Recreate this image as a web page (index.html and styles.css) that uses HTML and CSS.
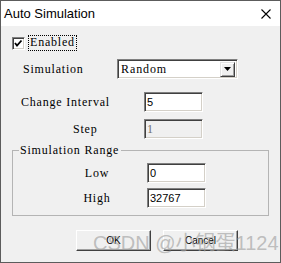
FILE: index.html
```html
<!DOCTYPE html>
<html lang="en">
<head>
  <meta charset="UTF-8" />
  <title>Auto Simulation</title>
  <link rel="stylesheet" href="styles.css">
</head>
<body>

<div class="window">
  <div class="titlebar">
    <span class="title">Auto Simulation</span>
    <svg class="close" width="10" height="10" viewBox="0 0 10 10">
      <path d="M0.5 0.5 L9.5 9.5 M9.5 0.5 L0.5 9.5" stroke="#000" stroke-width="1.1" fill="none"/>
    </svg>
  </div>

  <div class="dialog">
    <div class="row row-enabled">
      <span class="check">
        <svg width="9" height="9" viewBox="0 0 9 9">
          <path d="M1 4 L3 6.5 L7.5 1.5" stroke="#000" stroke-width="1.8" fill="none"/>
        </svg>
      </span>
      <span class="focus">Enabled</span>
    </div>

    <div class="row row-sim">
      <span class="label lbl-sim">Simulation</span>
      <div class="combo">
        <span class="combo-text">Random</span>
        <span class="combo-btn">
          <svg width="7" height="4" viewBox="0 0 7 4"><path d="M0 0 H7 L3.5 4 Z" fill="#000"/></svg>
        </span>
      </div>
    </div>

    <div class="row row-interval">
      <span class="label lbl-interval">Change Interval</span>
      <div class="edit">5</div>
    </div>

    <div class="row row-step">
      <span class="label lbl-step">Step</span>
      <div class="edit disabled">1</div>
    </div>

    <fieldset class="group">
      <legend>Simulation Range</legend>
      <div class="row row-low">
        <span class="label lbl-range">Low</span>
        <div class="edit">0</div>
      </div>
      <div class="row row-high">
        <span class="label lbl-range">High</span>
        <div class="edit">32767</div>
      </div>
    </fieldset>

    <div class="buttons">
      <button class="btn">OK</button>
      <button class="btn">Cancel</button>
    </div>
  </div>

  <div class="watermark">CSDN @小锅蛋1124</div>
</div>

</body>
</html>
```

FILE: styles.css
```css
body {
  margin: 0;
  background: #fff;
}

.window {
  position: relative;
  width: 281px;
  height: 263px;
  box-sizing: border-box;
  border: 1px solid #5c5c5c;
  background: #f0f0f0;
  overflow: hidden;
}

.titlebar {
  height: 25px;
  background: #fff;
  display: flex;
  align-items: center;
  justify-content: space-between;
  padding: 0 9px 0 3px;
}

.title {
  font-family: "Liberation Sans", Arial, sans-serif;
  font-size: 13px;
  color: #000;
}

.close {
  margin-top: 1px;
}

.dialog {
  font-family: "Liberation Serif", "Times New Roman", serif;
  font-size: 12px;
  letter-spacing: 0.8px;
  color: #000;
}

.row {
  display: flex;
  align-items: center;
}

.row-enabled {
  height: 16px;
  margin-top: 9px;
  padding-left: 11px;
}

.check {
  width: 13px;
  height: 13px;
  box-sizing: border-box;
  background: #fff;
  border-top: 1px solid #808080;
  border-left: 1px solid #808080;
  border-right: 1px solid #fff;
  border-bottom: 1px solid #fff;
  box-shadow: inset 1px 1px 0 #404040, inset -1px -1px 0 #d4d0c8;
  display: flex;
  align-items: center;
  justify-content: center;
}

.focus {
  margin-left: 3px;
  padding: 1px 1px 2px 1px;
  border: 1px dotted #000;
  line-height: 11px;
}

.row-sim {
  height: 20px;
  margin-top: 8px;
}

.label {
  white-space: nowrap;
}

.lbl-sim {
  padding-left: 22px;
  width: 94px;
}

.combo {
  width: 121px;
  height: 20px;
  box-sizing: border-box;
  background: #fff;
  border-top: 1px solid #808080;
  border-left: 1px solid #808080;
  border-right: 1px solid #fff;
  border-bottom: 1px solid #fff;
  box-shadow: inset 1px 1px 0 #404040, inset -1px -1px 0 #d4d0c8;
  display: flex;
  align-items: center;
  justify-content: space-between;
  padding: 0 2px 0 3px;
}

.combo-text {
  letter-spacing: 0.9px;
}

.combo-btn {
  width: 15px;
  height: 15px;
  box-sizing: border-box;
  background: #f0f0f0;
  border-top: 1px solid #e3e3e3;
  border-left: 1px solid #e3e3e3;
  border-right: 1px solid #404040;
  border-bottom: 1px solid #404040;
  box-shadow: inset 1px 1px 0 #fff, inset -1px -1px 0 #a0a0a0;
  display: flex;
  align-items: center;
  justify-content: center;
}

.edit {
  width: 59px;
  height: 20px;
  box-sizing: border-box;
  background: #fff;
  border-top: 1px solid #808080;
  border-left: 1px solid #808080;
  border-right: 1px solid #fff;
  border-bottom: 1px solid #fff;
  box-shadow: inset 1px 1px 0 #404040, inset -1px -1px 0 #d4d0c8;
  padding: 0 2px;
  font-family: "Liberation Sans", Arial, sans-serif;
  font-size: 11px;
  letter-spacing: 0;
  line-height: 18px;
}

.edit.disabled {
  background: #f0f0f0;
  color: #6d6d6d;
  font-family: "Liberation Serif", "Times New Roman", serif;
  font-size: 12px;
}

.row-interval {
  height: 20px;
  margin-top: 13px;
}

.lbl-interval {
  padding-left: 20px;
  width: 123px;
}

.row-step {
  height: 20px;
  margin-top: 7px;
}

.lbl-step {
  padding-left: 72px;
  width: 71px;
}

.group {
  margin: 5px 11px 0 11px;
  padding: 0;
  height: 72px;
  box-sizing: border-box;
  border: 1px solid #b4b4b4;
  min-width: 0;
}

.group legend {
  margin-left: 6px;
  padding: 0 2px 0 1px;
  line-height: 12px;
}

.row-low {
  height: 20px;
  margin-top: 7px;
}

.row-high {
  height: 20px;
  margin-top: 5px;
}

.lbl-range {
  margin-left: 64px;
  width: 40px;
  text-align: center;
  margin-right: 30px;
}

.buttons {
  display: flex;
  gap: 12px;
  margin-top: 14px;
  padding-left: 75px;
}

.btn {
  width: 75px;
  height: 21px;
  box-sizing: border-box;
  margin: 0;
  padding: 0;
  background: #f0f0f0;
  border-top: 1px solid #fff;
  border-left: 1px solid #fff;
  border-right: 1px solid #404040;
  border-bottom: 1px solid #404040;
  box-shadow: inset -1px -1px 0 #a0a0a0;
  font-family: "Liberation Sans", Arial, sans-serif;
  font-size: 10px;
  color: #000;
}

.watermark {
  position: absolute;
  left: 92px;
  top: 226px;
  font-family: "Liberation Sans", "Noto Sans CJK SC", sans-serif;
  font-size: 20px;
  color: rgba(160, 160, 160, 0.65);
  white-space: nowrap;
  pointer-events: none;
}
```
